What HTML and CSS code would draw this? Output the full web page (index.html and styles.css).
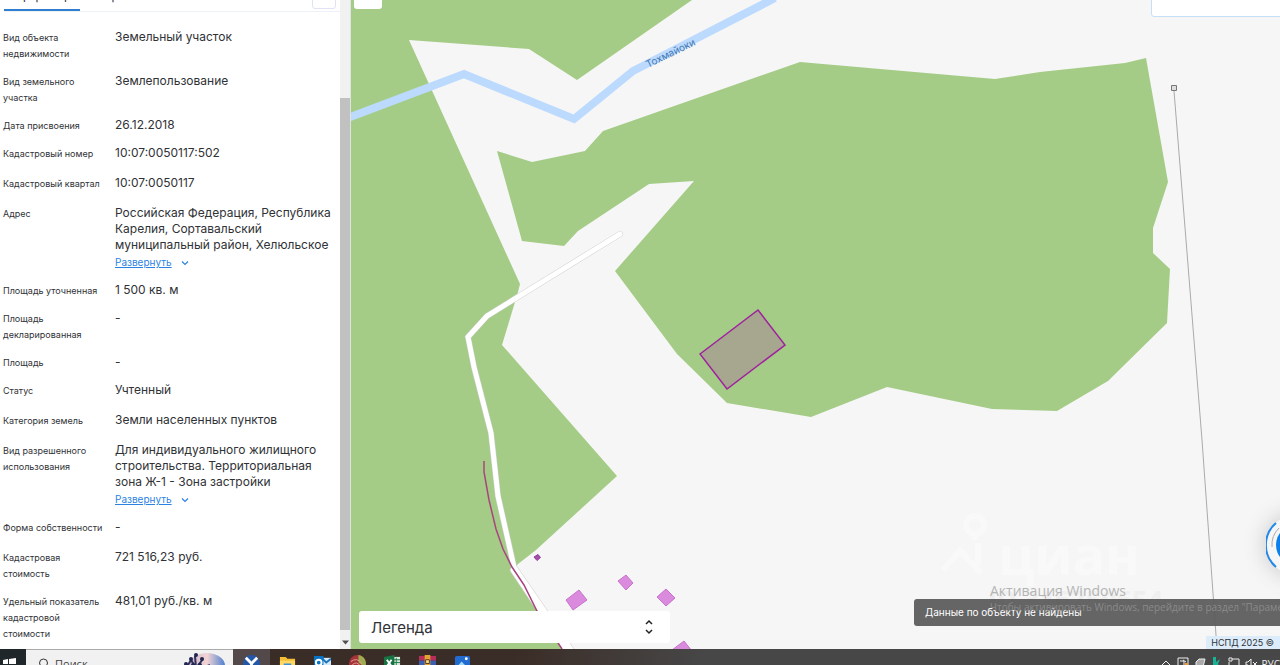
FILE: index.html
```html
<!DOCTYPE html>
<html lang="ru">
<head>
  <meta charset="UTF-8">
  <meta name="viewport" content="width=device-width, initial-scale=1">
  <title>НСПД - Земельный участок</title>
  <link rel="stylesheet" href="styles.css">
</head>
<body>
  <div class="desktop">
    <main class="app">
      <!-- Object card -->
      <aside class="panel">
        <div class="panel-body">
          <nav class="tabs">
            <button class="tab active">Информация</button>
            <button class="tab">Сервисы</button>
            <button class="tab-more" aria-label="Ещё">›</button>
          </nav>
          <dl class="props">
            <div class="row"><dt>Вид объекта недвижимости</dt><dd>Земельный участок</dd></div>
            <div class="row"><dt>Вид земельного участка</dt><dd>Землепользование</dd></div>
            <div class="row"><dt>Дата присвоения</dt><dd>26.12.2018</dd></div>
            <div class="row tall"><dt>Кадастровый номер</dt><dd>10:07:0050117:502</dd></div>
            <div class="row tall"><dt>Кадастровый квартал</dt><dd>10:07:0050117</dd></div>
            <div class="row">
              <dt>Адрес</dt>
              <dd>Российская Федерация, Республика Карелия, Сортавальский муниципальный район, Хелюльское
                <a class="expand" href="#"><span>Развернуть</span><svg viewBox="0 0 8 6"><path d="M1 1.5l3 3 3-3"/></svg></a>
              </dd>
            </div>
            <div class="row"><dt>Площадь уточненная</dt><dd>1 500 кв. м</dd></div>
            <div class="row"><dt>Площадь декларированная</dt><dd>-</dd></div>
            <div class="row"><dt>Площадь</dt><dd>-</dd></div>
            <div class="row tall"><dt>Статус</dt><dd>Учтенный</dd></div>
            <div class="row tall"><dt>Категория земель</dt><dd>Земли населенных пунктов</dd></div>
            <div class="row">
              <dt>Вид разрешенного использования</dt>
              <dd>Для индивидуального жилищного строительства. Территориальная зона Ж-1 - Зона застройки
                <a class="expand" href="#"><span>Развернуть</span><svg viewBox="0 0 8 6"><path d="M1 1.5l3 3 3-3"/></svg></a>
              </dd>
            </div>
            <div class="row tall"><dt>Форма собственности</dt><dd>-</dd></div>
            <div class="row"><dt>Кадастровая стоимость</dt><dd>721 516,23 руб.</dd></div>
            <div class="row"><dt>Удельный показатель кадастровой стоимости</dt><dd>481,01 руб./кв. м</dd></div>
          </dl>
        </div>
        <div class="scrollbar">
          <div class="thumb"></div>
          <svg class="arrow" viewBox="0 0 10 10"><path d="M2 3h7L5.500 7z"/></svg>
        </div>
      </aside>

      <!-- Map -->
      <section class="map">
        <svg class="canvas" viewBox="351 0 929 649" preserveAspectRatio="xMinYMin slice">
          <g class="forest">
            <path d="M351 0H692L577 80 529 49 409 40 520 284 518 292 502 345 617 476 536 550 518 564 511 572 564 649H351z"/>
            <path d="M497 151L532 162 585 151 603 131 800 62 995 79 1040 72 1125 63 1146 58 1168 182 1153 228V253L1170 269 1167 323 1108 381 1057 411 992 409 887 387 811 417 727 403 677 354 615 271 694 181 649 184 578 231 564 246 522 241z"/>
          </g>
          <path class="river" d="M345 119L464 74 574 119 633 71 775 -2"/>
          <text class="river-name" transform="translate(648 68) rotate(-26)">Тохмайоки</text>
          <path class="road-case" d="M620 234L487 316 468 337 474 367 491 433 498 496 514 567 572 651"/>
          <path class="road-case" d="M513 570L567 651"/>
          <path class="road" d="M513 570L567 651"/>
          <path class="road" d="M620 234L487 316 468 337 474 367 491 433 498 496 514 567 572 651"/>
          <path class="pipe" d="M484 461V472L489 500 496 529 503 549 512 567 524 585 537 611 562 649"/>
          <g class="building">
            <path d="M566 600L579 590 587 600 573 610z"/>
            <path d="M618 581L626 575 633 583 626 590z"/>
            <path d="M657 597L666 589 675 598 666 606z"/>
            <path d="M672 650L684 641 692 651z"/>
            <path class="dark" d="M534 557L538 554.500 540.500 557.500 537 560.500z"/>
          </g>
          <path class="parcel" d="M700 354L758 310 785 345 727 389z"/>
          <path class="power" d="M1174 91L1186 240 1202 440 1217 649"/>
          <path class="pole" d="M1171.500 85.500h5v5h-5z"/>
          <g class="brand">
            <circle cx="975" cy="525" r="9"/>
            <path d="M975 534V540M943 570L960 551 981 573M958 549L966 555M978 543V566"/>
            <text x="998" y="575">циан</text>
          </g>
        </svg>

        <button class="map-tool" aria-label="Меню карты"></button>
        <div class="map-search"></div>
        <button class="assistant" aria-label="Помощник">
          <svg viewBox="0 0 60 60"><circle class="core" cx="30" cy="30" r="20"/><path class="inner" d="M13 13A24 24 0 0 0 6 32"/><path class="outer" d="M10 8A29 29 0 0 0 10 52"/></svg>
        </button>
        <button class="legend"><span>Легенда</span><svg viewBox="0 0 10 16"><path d="M2 5l3-3 3 3M2 11l3 3 3-3"/></svg></button>
        <p class="ad-id">ID 316750654</p>
        <div class="toast" role="status">Данные по объекту не найдены</div>
        <div class="activation">
          <p class="activation-title">Активация Windows</p>
          <p class="activation-text">Чтобы активировать Windows, перейдите в раздел "Параметры".</p>
        </div>
        <div class="copyright">НСПД 2025 ©</div>
      </section>
    </main>

    <!-- Taskbar -->
    <footer class="taskbar">
      <button class="start" aria-label="Пуск"><svg viewBox="0 0 13 13"><path d="M0 2l5-1v5H0zM6 1l7-1v6H6zM0 7h5v5l-5-1zM6 7h7v6l-7-1z"/></svg></button>
      <label class="search">
        <svg class="lens" viewBox="0 0 12 14"><circle cx="6.500" cy="5" r="4"/><path d="M4 8L1 12"/></svg>
        <input type="text" placeholder="Поиск" aria-label="Поиск">
        <svg class="art" viewBox="0 0 52 24">
          <defs><linearGradient id="glow"><stop offset="0" stop-color="#c9b4cf"/><stop offset=".5" stop-color="#f3d5d3"/><stop offset="1" stop-color="#4e7fd0"/></linearGradient></defs>
          <ellipse cx="32" cy="14" rx="18" ry="13" fill="url(#glow)"/>
          <path d="M10 18L16 8 21 16 20 4M21 16L28 7M24 17L35 13" stroke="#30305c" stroke-width="2" fill="none"/>
          <g fill="#22264f"><circle cx="11" cy="12" r="2"/><circle cx="16" cy="7" r="2"/><circle cx="21" cy="3" r="2"/><circle cx="27" cy="7" r="2"/><circle cx="18" cy="13" r="2"/><circle cx="25" cy="13" r="2"/></g>
        </svg>
      </label>
      <div class="apps">
        <button class="app-icon current" aria-label="Браузер"><svg viewBox="0 0 18 18"><circle cx="9" cy="9" r="9" fill="#2557a8"/><path d="M3 3l6 6 6-6M9 9v7" stroke="#fff" stroke-width="3" fill="none"/></svg></button>
        <button class="app-icon" aria-label="Проводник"><svg viewBox="0 0 18 18"><path d="M1 2h6l2 2h8v12H1z" fill="#f5bf35"/><path d="M1 6h16v10H1z" fill="#ffd868"/><path d="M5 9h8v7H5z" fill="#3e90d0"/></svg></button>
        <button class="app-icon" aria-label="Outlook"><svg viewBox="0 0 18 18"><path d="M8 3h10v11H8z" fill="#d5eafa"/><path d="M9 4l4 4 5-4" stroke="#1976bd" stroke-width="2" fill="none"/><path d="M0 1h10v16H0z" fill="#0873c4"/><circle cx="5" cy="8" r="3" stroke="#fff" stroke-width="2" fill="none"/></svg></button>
        <button class="app-icon" aria-label="Графика"><svg viewBox="0 0 18 18"><circle cx="9" cy="9" r="9" fill="#a6333a"/><path d="M10 0a9 9 0 0 1 7 13L10 8z" fill="#9cac4f"/><path d="M2 7q6-5 12 2M3 11q5-6 10 2" stroke="#e2a08f" fill="none"/></svg></button>
        <button class="app-icon" aria-label="Excel"><svg viewBox="0 0 18 18"><path d="M9 2h8v13H9z" fill="#d6eadc"/><path d="M10 5h7M10 8h7M13 3v11" stroke="#24774b" fill="none"/><path d="M0 2l11-2v18L0 16z" fill="#187343"/><path d="M3 5l5 7M8 5l-5 7" stroke="#fff" stroke-width="2"/></svg></button>
        <button class="app-icon" aria-label="Архиватор"><svg viewBox="0 0 18 18"><path d="M0 1h18v5H0z" fill="#b62f5c"/><path d="M0 6h18v5H0z" fill="#3b5fae"/><path d="M0 11h18v6H0z" fill="#39834d"/><path d="M6 0h6v17H6z" fill="#e2a331"/><path d="M7 5h4v4H7z" stroke="#5a3518" fill="#f2db85"/></svg></button>
        <button class="app-icon" aria-label="Фотографии"><svg viewBox="0 0 18 18"><rect x="1" y="1" width="16" height="16" rx="2" fill="#226bd0"/><path d="M1 15L8 7l9 9z" fill="#9cd8f7"/><circle cx="13" cy="4" r="1.500" fill="#fff"/></svg></button>
      </div>
      <div class="tray">
        <svg viewBox="0 0 12 12"><path d="M2 8l4-4 4 4"/></svg>
        <svg viewBox="0 0 12 12"><path d="M1 1h10v10H1zM3 4h4v4M6 3l3 2"/><path class="orange" d="M8 6h3v4H8z"/></svg>
        <svg viewBox="0 0 12 12"><path class="grey" d="M2 5l3-3h6L9 10H2z"/></svg>
        <svg viewBox="0 0 12 12"><path class="green" d="M2 0h3v5l4-3-2 5 3 5H2z"/></svg>
        <svg viewBox="0 0 12 12"><path d="M4 2h7v7H1V5M1 1h3v3H1z"/></svg>
        <svg viewBox="0 0 12 12"><path d="M1 5h2l3-3v9L3 8H1zM8 5l4 4M12 5L8 9"/></svg>
        <span class="lang">РУС</span>
      </div>
    </footer>
  </div>
</body>
</html>
```

FILE: styles.css
```css
* { box-sizing: border-box; }
body {
  margin: 0;
  font-family: Inter, "Liberation Sans", sans-serif;
  color: #303236;
  background: #fff;
}
button { font: inherit; color: inherit; border: 0; padding: 0; background: none; }
p { margin: 0; }
.desktop { height: 100vh; display: flex; flex-direction: column; overflow: hidden; }
.app { flex: 1; min-height: 0; display: flex; }

/* Object card */
.panel { width: 351px; flex: none; display: flex; border-right: 1px solid #dfe3df; overflow: hidden; }
.panel-body { flex: 1; min-width: 0; overflow: hidden; }
.tabs {
  display: flex;
  gap: 16px;
  height: 36px;
  margin: -24px 0 0 4px;
  border-bottom: 1px solid #eef2f8;
  font-size: 12px;
}
.tab { border-bottom: 2px solid transparent; height: 35px; padding-top: 6px; }
.tab.active { border-color: #2f7fd0; }
.tab-more { width: 24px; height: 33px; margin: 0 4px 0 auto; border: 1px solid #dfe3f5; border-radius: 3px; color: #8d9cc0; }
.props { margin: 0; padding: 17px 8px 0 3px; display: flex; flex-direction: column; gap: 12px; }
.row { display: grid; grid-template-columns: 100px 1fr; column-gap: 12px; }
.row.tall { min-height: 18px; }
dt { font-size: 9px; line-height: 16px; padding-top: 1px; margin-bottom: -1px; }
dd { margin: 0; font-size: 12px; line-height: 16px; }
.expand { display: flex; align-items: center; gap: 9px; margin-top: 2px; font-size: 10px; line-height: 15px; color: #2b82e3; text-decoration: none; }
.expand span { text-decoration: underline; }
.expand svg { width: 8px; height: 6px; fill: none; stroke: currentColor; stroke-width: 1.200; }
.scrollbar { width: 10px; flex: none; display: flex; flex-direction: column; justify-content: flex-end; background: #f1f1f1; }
.thumb { height: 82%; background: #c1c1c1; }
.arrow { height: 19px; padding-top: 6px; fill: #505050; }

/* Map */
.map { flex: 1; min-width: 0; position: relative; overflow: hidden; background: #f6f6f6; }
.canvas { display: block; width: 100%; height: 100%; }
.canvas path { fill: none; }
.canvas .forest path { fill: #a4cc86; }
.river { stroke: #bbdafd; stroke-width: 8; }
.river-name { font-size: 10px; fill: #3f78b5; }
.road-case { stroke: #cfcfcf; stroke-width: 6; stroke-linecap: round; }
.road { stroke: #fff; stroke-width: 5; stroke-linecap: round; }
.pipe { stroke: #a84580; stroke-width: 1.500; }
.canvas .building path { fill: #da8bdd; stroke: #c873cc; }
.canvas .building .dark { fill: #a550ae; stroke: #8c3e98; }
.canvas .parcel { fill: #a7a68e; stroke: #a020a0; stroke-width: 1.500; }
.power { stroke: #aaa; }
.canvas .pole { fill: #ddd; stroke: #777; }
.brand { stroke: #f9f9f9; stroke-width: 6; fill: none; }
.brand text { font: bold 53px "Open Sans", sans-serif; fill: #f9f9f9; stroke: none; }
.map-tool { position: absolute; left: 3px; top: -20px; width: 28px; height: 29px; background: #fff; border-radius: 3px; }
.map-search { position: absolute; right: -4px; top: -20px; width: 133px; height: 37px; background: #fff; border: 1px solid #c7e0f7; border-radius: 3px; }
.assistant { position: absolute; right: -46px; bottom: 74px; width: 60px; height: 60px; border-radius: 50%; box-shadow: 0 0 24px #0003; }
.assistant svg { display: block; fill: none; stroke-width: 2; }
.assistant .core { fill: #0d7fea; }
.assistant .inner { stroke: #aaa; stroke-width: 1; }
.assistant .outer { stroke: #2388e8; }
.legend {
  position: absolute;
  left: 8px;
  bottom: 6px;
  width: 311px;
  height: 32px;
  padding: 0 16px 0 12px;
  display: flex;
  align-items: center;
  justify-content: space-between;
  background: #fff;
  border-radius: 3px;
  font-size: 15px;
}
.legend svg { width: 10px; height: 16px; fill: none; stroke: #222; stroke-width: 1.500; }
.ad-id { position: absolute; right: 117px; bottom: 36px; font: bold 27px/27px "Open Sans", sans-serif; color: #efefef; }
.toast {
  position: absolute;
  right: -8px;
  bottom: 23px;
  width: 374px;
  padding: 0 11px;
  font-size: 10px;
  line-height: 27px;
  color: #fff;
  background: #5b5b5bf0;
  border-radius: 3px;
}
.activation { position: absolute; right: 0; bottom: 34px; width: 290px; white-space: nowrap; font-family: "Open Sans", sans-serif; }
.activation-title { font-size: 14px; line-height: 16px; color: #b4b4b4; }
.activation-text { font-size: 10px; line-height: 16px; color: #8a8a8a; }
.copyright { position: absolute; right: 0; bottom: 0; padding: 0 6px 0 5px; font-size: 9px; line-height: 13px; background: #dcecfb; }

/* Taskbar, runs off the lower edge of the screen */
.taskbar { height: 16px; flex: none; display: flex; align-items: flex-start; background: linear-gradient(90deg, #3a2c26 0 40%, #474747 55%); overflow: hidden; }
.start { width: 26px; height: 40px; flex: none; background: #20272b; display: flex; align-items: flex-start; padding: 9px 0 0 3px; }
.start svg { width: 13px; height: 13px; fill: #fff; }
.search { width: 207px; height: 40px; flex: none; display: flex; align-items: flex-start; background: #f1f1f1; border-top: 1px solid #aaa; padding-left: 11px; }
.lens { width: 12px; height: 14px; margin-top: 8px; fill: none; stroke: #333; }
.search input { width: 126px; height: 27px; padding: 0 0 0 6px; border: 0; background: none; font: 11px "Open Sans", sans-serif; }
.search input::placeholder { color: #444; opacity: 1; }
.art { width: 52px; height: 24px; margin-top: 2px; }
.apps { display: flex; }
.app-icon { width: 35px; height: 40px; padding-top: 6px; display: flex; justify-content: center; }
.app-icon.current { width: 37px; background: #53494a; }
.app-icon svg { width: 17px; height: 17px; }
.tray { margin-left: auto; padding: 8px 0 0; display: flex; gap: 5px; color: #eee; }
.tray svg { width: 12px; height: 12px; fill: none; stroke: #eee; }
.tray .orange { fill: #f39a32; stroke: none; }
.tray .grey { fill: #aaa; }
.tray .green { fill: #18b394; stroke: none; }
.lang { font: 10px/14px "Open Sans", sans-serif; }
```
